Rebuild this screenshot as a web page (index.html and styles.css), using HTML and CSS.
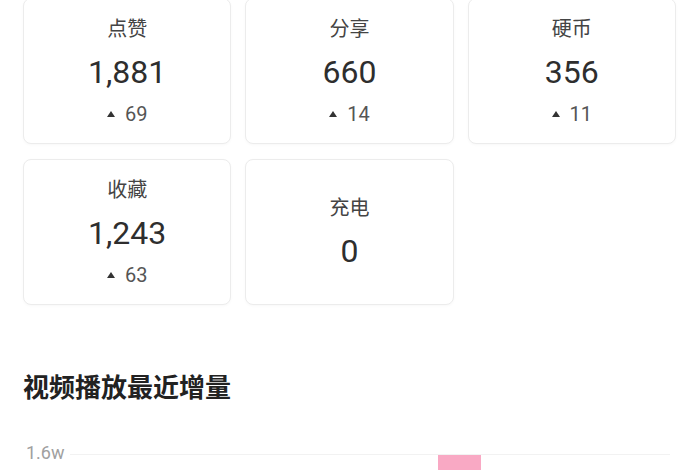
FILE: index.html
```html
<!DOCTYPE html>
<html lang="zh-CN">
<head>
<meta charset="utf-8">
<title>数据</title>
<link rel="stylesheet" href="styles.css">
</head>
<body>
<main class="page">
  <section class="stats">
    <div class="card">
      <div class="label">点赞</div>
      <div class="value">1,881</div>
      <div class="delta"><span class="tri"></span>69</div>
    </div>
    <div class="card">
      <div class="label">分享</div>
      <div class="value">660</div>
      <div class="delta"><span class="tri"></span>14</div>
    </div>
    <div class="card">
      <div class="label">硬币</div>
      <div class="value">356</div>
      <div class="delta"><span class="tri"></span>11</div>
    </div>
    <div class="card">
      <div class="label">收藏</div>
      <div class="value">1,243</div>
      <div class="delta"><span class="tri"></span>63</div>
    </div>
    <div class="card">
      <div class="label">充电</div>
      <div class="value">0</div>
    </div>
  </section>

  <h2 class="title">视频播放最近增量</h2>

  <section class="chart">
    <div class="axis">
      <div class="tick">1.6w</div>
    </div>
    <div class="plot">
      <div class="slot"><div class="bar" style="height:60px"></div></div>
      <div class="slot"><div class="bar" style="height:80px"></div></div>
      <div class="slot"><div class="bar" style="height:50px"></div></div>
      <div class="slot"><div class="bar" style="height:90px"></div></div>
      <div class="slot"><div class="bar" style="height:200px"></div></div>
      <div class="slot"><div class="bar" style="height:70px"></div></div>
      <div class="slot"><div class="bar" style="height:40px"></div></div>
    </div>
  </section>
</main>
</body>
</html>
```

FILE: styles.css
```css
* { box-sizing: border-box; }

html, body {
  margin: 0;
  padding: 0;
  background: #ffffff;
  overflow: hidden;
}

body {
  font-family: Roboto, "Noto Sans CJK SC", "Noto Sans", sans-serif;
  color: #333333;
}

.page {
  padding: 0 24px 0 23px;
  margin-top: -2px;
}

.stats {
  display: grid;
  grid-template-columns: repeat(3, 1fr);
  gap: 15px 14px;
}

.card {
  height: 146px;
  border: 1px solid #ececec;
  border-radius: 8px;
  box-shadow: 0 1px 3px rgba(0, 0, 0, 0.03);
  display: flex;
  flex-direction: column;
  align-items: center;
  justify-content: center;
  background: #fff;
}

.label {
  font-size: 20px;
  line-height: 28px;
  color: #444444;
}

.value {
  font-size: 32px;
  line-height: 40px;
  color: #2e2e2e;
  margin-top: 9px;
}

.delta {
  font-size: 20px;
  line-height: 28px;
  color: #555555;
  margin-top: 8px;
  display: flex;
  align-items: center;
}

.tri {
  width: 0;
  height: 0;
  border-left: 4.5px solid transparent;
  border-right: 4.5px solid transparent;
  border-bottom: 6px solid #333333;
  margin-right: 10px;
  margin-top: 1px;
}

.title {
  margin: 65px 0 0 0;
  font-size: 26px;
  line-height: 36px;
  font-weight: 700;
  color: #222222;
}

.chart {
  display: flex;
  margin-top: 37px;
}

.axis {
  width: 47px;
  flex: none;
}

.tick {
  font-size: 18px;
  line-height: 20px;
  color: #a0a0a0;
  margin-left: 3px;
}

.plot {
  flex: 1;
  margin-top: 11px;
  height: 200px;
  border-top: 1px solid #f2f2f2;
  display: grid;
  grid-template-columns: repeat(7, 1fr);
  align-items: end;
  margin-right: 6px;
  padding-left: 10px;
}

.slot {
  display: flex;
  justify-content: center;
  align-items: flex-end;
  height: 100%;
}

.bar {
  width: 43px;
  background: #f9a9c4;
}
```
